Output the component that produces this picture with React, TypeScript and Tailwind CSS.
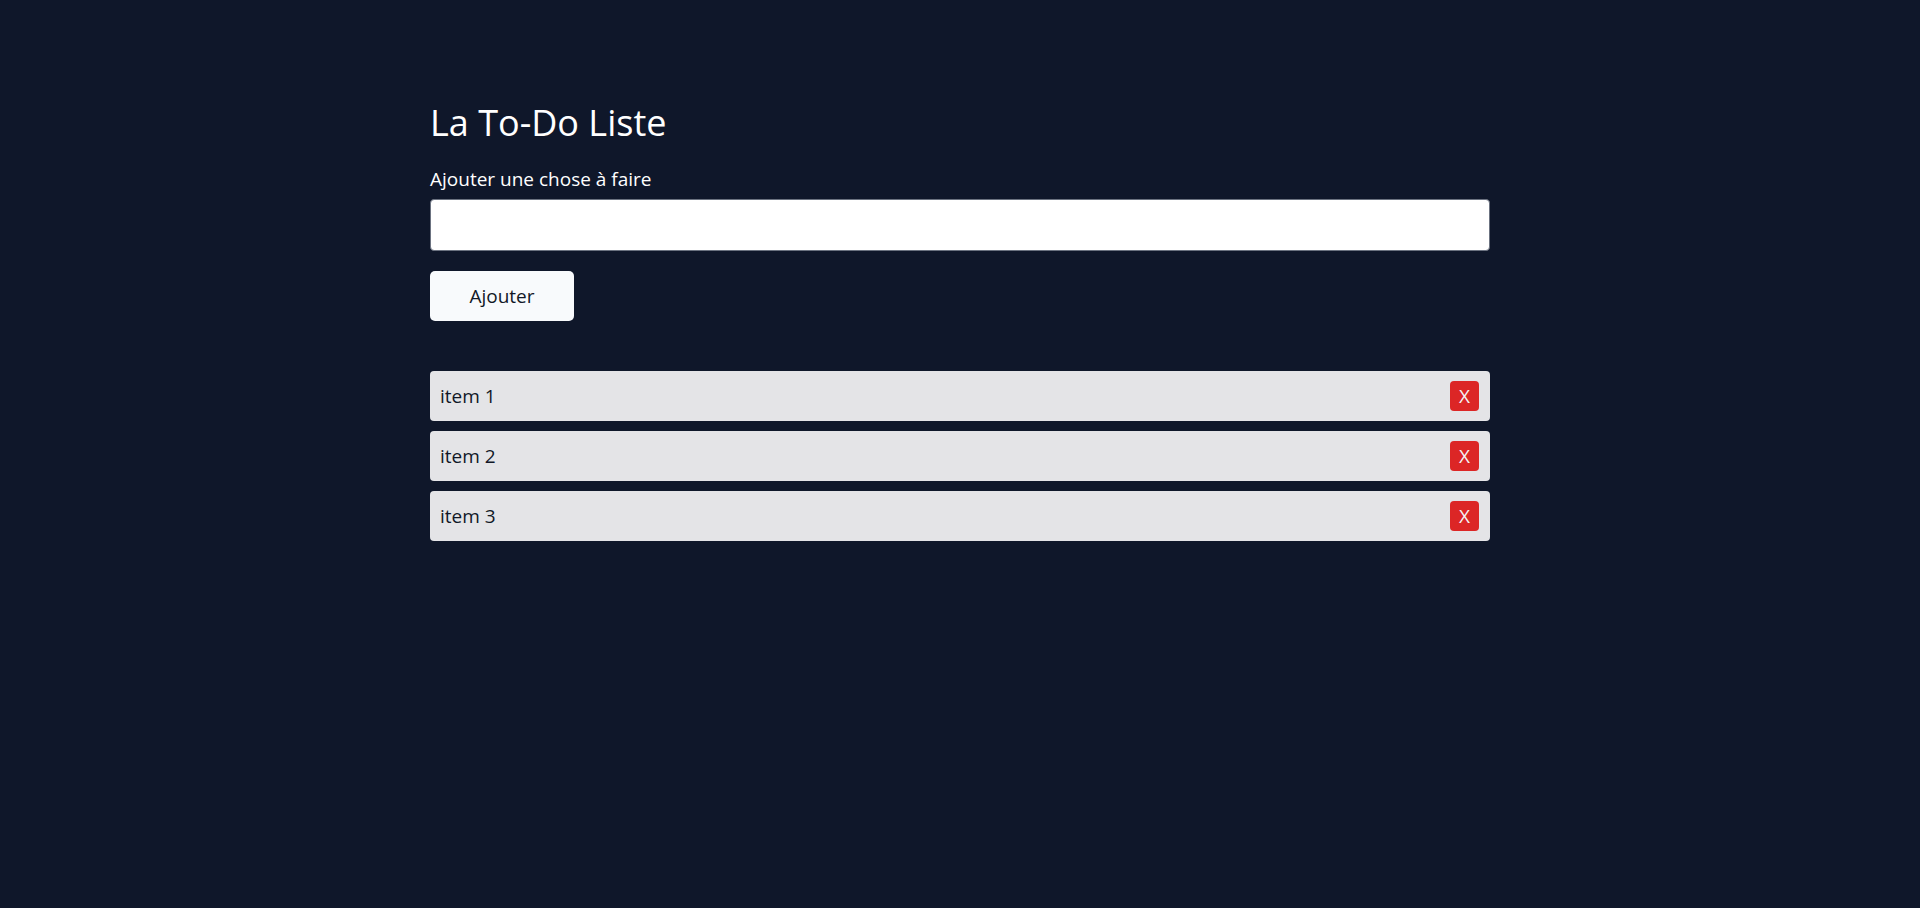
import React from "react";

export default function App() {
  const items = ["item 1", "item 2", "item 3"];
  return (
    <div
      className="min-h-[908px] w-full bg-[#0f172a] pt-[97px]"
      style={{ fontFamily: '"Open Sans", "Noto Sans", sans-serif' }}
    >
      <div className="mx-auto w-[1060px]">
        <h1 className="text-[36px] leading-[51px] text-white">La To-Do Liste</h1>
        <label className="mt-[18px] block text-[19px] leading-[26px] text-white">
          Ajouter une chose à faire
        </label>
        <input
          type="text"
          className="mt-[7px] block h-[52px] w-full rounded-[4px] border border-[#6b7280] bg-white px-3 text-[19px] text-black outline-none"
        />
        <button className="mt-[20px] block h-[50px] w-[144px] rounded-[5px] bg-[#f8fafc] text-[19px] text-[#111827]">
          Ajouter
        </button>
        <ul className="mt-[50px] flex flex-col gap-[10px]">
          {items.map((it) => (
            <li
              key={it}
              className="flex h-[50px] items-center justify-between rounded-[4px] bg-[#e4e4e7] pl-[10px] pr-[11px]"
            >
              <span className="text-[19px] text-[#111827]">{it}</span>
              <button className="flex h-[30px] w-[29px] items-center justify-center rounded-[4px] bg-[#dc2626] text-[19px] text-[#f3f4f6]">
                X
              </button>
            </li>
          ))}
        </ul>
      </div>
    </div>
  );
}
